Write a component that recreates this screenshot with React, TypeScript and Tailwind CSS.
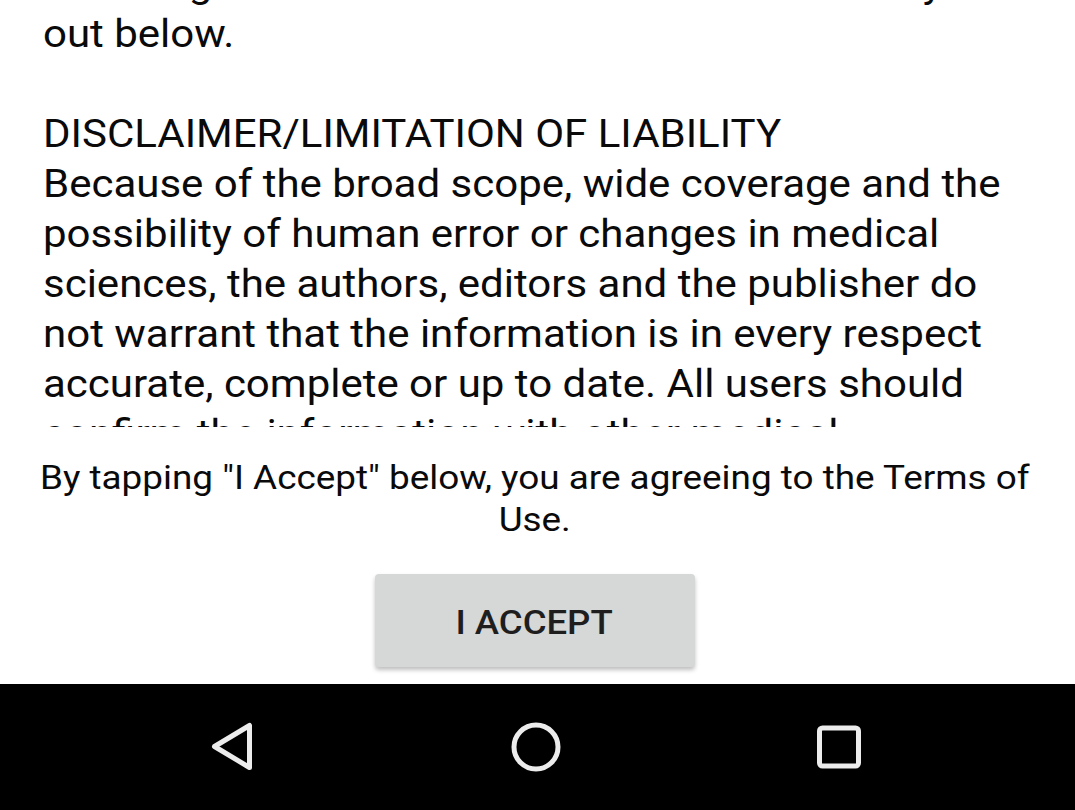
import React from "react";

const lines = [
  "including the disclaimer and limitation of liability as set",
  "out below.",
  "\u00a0",
  "DISCLAIMER/LIMITATION OF LIABILITY",
  "Because of the broad scope, wide coverage and the",
  "possibility of human error or changes in medical",
  "sciences, the authors, editors and the publisher do",
  "not warrant that the information is in every respect",
  "accurate, complete or up to date. All users should",
  "confirm the information with other medical",
  "sources before relying on it.",
];

export default function App() {
  return (
    <div
      className="w-[1075px] h-[810px] flex flex-col bg-white overflow-hidden text-[#0a0a0a]"
      style={{ fontFamily: "Roboto, 'Noto Sans', sans-serif" }}
    >
      <div className="h-[427px] overflow-hidden px-[43px] shrink-0">
        <div className="-mt-[41px] text-[38px] leading-[50px] whitespace-nowrap origin-left scale-x-[1.105]">
          {lines.map((l, i) => (
            <div key={i}>{l}</div>
          ))}
        </div>
      </div>
      <div className="mt-[30px] pr-[5px] text-center text-[33.3px] leading-[42px] whitespace-nowrap scale-x-[1.107]">
        By tapping "I Accept" below, you are agreeing to the Terms of
        <br />
        Use.
      </div>
      <div className="flex justify-center mt-[33px] pr-[6px]">
        <button className="w-[320px] h-[93px] rounded-[4px] bg-[#d6d7d7] shadow-[0_3px_4px_rgba(0,0,0,0.25)] text-[#1e1e1e]">
          <span className="inline-block text-[33px] font-medium scale-x-[1.107] pt-[5px]">I ACCEPT</span>
        </button>
      </div>
      <div className="mt-auto h-[126px] bg-black flex items-center pl-[208px] gap-[254px] shrink-0">
        <svg width="48" height="52" viewBox="0 0 48 52">
          <path
            d="M41.5 4.5 L41.5 46.5 L6.5 25.5 Z"
            fill="none"
            stroke="#ececec"
            strokeWidth="5"
            strokeLinejoin="round"
          />
        </svg>
        <svg width="52" height="52" viewBox="0 0 52 52">
          <circle cx="26" cy="26" r="22" fill="none" stroke="#ececec" strokeWidth="5" />
        </svg>
        <svg width="48" height="48" viewBox="0 0 48 48">
          <rect x="3.5" y="5" width="39" height="38" rx="3" fill="none" stroke="#ececec" strokeWidth="5" />
        </svg>
      </div>
    </div>
  );
}
